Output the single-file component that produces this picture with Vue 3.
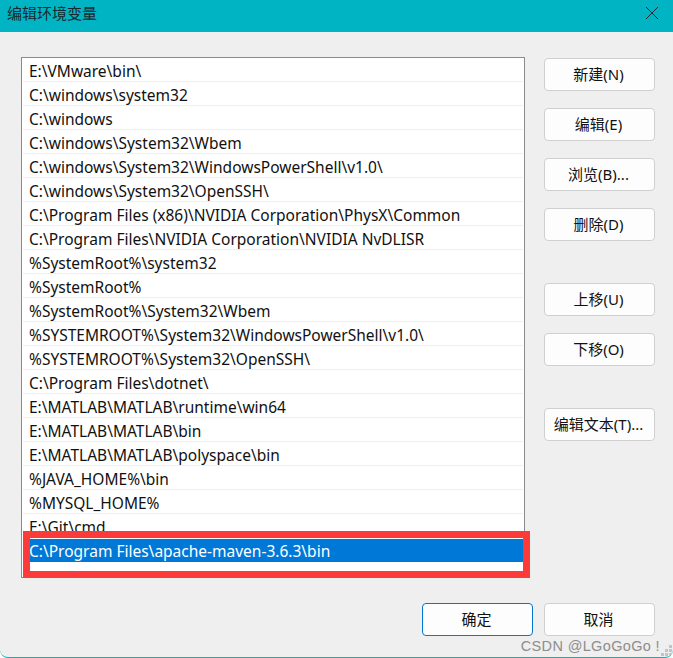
<script setup>
const rows = [
  'E:\\VMware\\bin\\',
  'C:\\windows\\system32',
  'C:\\windows',
  'C:\\windows\\System32\\Wbem',
  'C:\\windows\\System32\\WindowsPowerShell\\v1.0\\',
  'C:\\windows\\System32\\OpenSSH\\',
  'C:\\Program Files (x86)\\NVIDIA Corporation\\PhysX\\Common',
  'C:\\Program Files\\NVIDIA Corporation\\NVIDIA NvDLISR',
  '%SystemRoot%\\system32',
  '%SystemRoot%',
  '%SystemRoot%\\System32\\Wbem',
  '%SYSTEMROOT%\\System32\\WindowsPowerShell\\v1.0\\',
  '%SYSTEMROOT%\\System32\\OpenSSH\\',
  'C:\\Program Files\\dotnet\\',
  'E:\\MATLAB\\MATLAB\\runtime\\win64',
  'E:\\MATLAB\\MATLAB\\bin',
  'E:\\MATLAB\\MATLAB\\polyspace\\bin',
  '%JAVA_HOME%\\bin',
  '%MYSQL_HOME%',
  'E:\\Git\\cmd',
]
const selected = 'C:\\Program Files\\apache-maven-3.6.3\\bin'
const groups = [
  ['新建(N)', '编辑(E)', '浏览(B)...', '删除(D)'],
  ['上移(U)', '下移(O)'],
  ['编辑文本(T)...'],
]
</script>

<template>
  <div class="window">
    <header class="titlebar">
      <span class="title">编辑环境变量</span>
      <svg class="close" width="14" height="14" viewBox="0 0 14 14">
        <path d="M1 1 L13 13 M13 1 L1 13" stroke="#1c2b2e" stroke-width="1" fill="none" />
      </svg>
    </header>
    <main class="body">
      <div class="top">
        <div class="list">
          <div v-for="r in rows" :key="r" class="row">{{ r }}</div>
          <div class="row selected"><span class="sel-text">{{ selected }}</span></div>
          <div class="highlight"></div>
        </div>
        <div class="side">
          <div v-for="(g, i) in groups" :key="i" class="group">
            <button v-for="b in g" :key="b" class="btn">{{ b }}</button>
          </div>
        </div>
      </div>
      <div class="footer">
        <button class="btn primary">确定</button>
        <button class="btn">取消</button>
      </div>
    </main>
    <span class="mark">CSDN @LGoGoGo !</span>
    <svg class="grip" width="12" height="12" viewBox="0 0 12 12">
      <g fill="#c4c4c4">
        <rect x="8" y="0" width="3" height="3" />
        <rect x="4" y="4" width="3" height="3" />
        <rect x="8" y="4" width="3" height="3" />
        <rect x="0" y="8" width="3" height="3" />
        <rect x="4" y="8" width="3" height="3" />
        <rect x="8" y="8" width="3" height="3" />
      </g>
    </svg>
  </div>
</template>

<style>
html, body { margin: 0; background: #fff; }
</style>

<style scoped>
.window {
  position: relative;
  width: 673px;
  height: 658px;
  box-sizing: border-box;
  background: #efefef;
  border-bottom: 1px solid #00b4c4;
  border-radius: 0 0 8px 8px;
  overflow: hidden;
  font-family: "Noto Sans", "Noto Sans CJK SC", sans-serif;
  font-size: 15.5px;
  color: #111;
}
.titlebar {
  height: 32px;
  background: #00b4c4;
  display: flex;
  align-items: center;
  justify-content: space-between;
  padding: 0 14px 0 7px;
}
.title { font-size: 15px; line-height: 27px; margin-bottom: 5px; color: #17292c; }
.close { display: block; margin-bottom: 6px; }
.body { padding: 25px 18px 0 21px; }
.top { display: flex; justify-content: space-between; }
.list {
  position: relative;
  box-sizing: border-box;
  width: 504px;
  height: 521px;
  background: #fff;
  border: 1px solid #8a8a8f;
}
.row {
  box-sizing: border-box;
  height: 24px;
  margin: 0 1px;
  padding: 0 6px;
  line-height: 26px;
  border-bottom: 1px solid #efefef;
  white-space: nowrap;
}
.selected {
  border: 0;
  margin-left: 8px;
  padding: 0;
  margin-top: 1px;
  height: 23px;
  width: 493px;
  line-height: 24px;
  text-indent: -1px;
  background: #0078d7;
  color: #fff;
}
.highlight {
  position: absolute;
  left: 1px;
  top: 473px;
  width: 507px;
  height: 47px;
  box-sizing: border-box;
  border: 7px solid #fc3a3a;
}
.side { display: flex; flex-direction: column; gap: 42px; padding-top: 1px; }
.group { display: flex; flex-direction: column; gap: 17px; }
.btn {
  box-sizing: border-box;
  display: block;
  width: 111px;
  height: 33px;
  padding: 0 2px 2px 0;
  background: #fdfdfd;
  border: 1px solid #d0d0d0;
  border-radius: 4px;
  font: inherit;
  font-size: 15px;
  color: #111;
  white-space: nowrap;
}
.primary { border: 1px solid #0078d4; }
.footer {
  display: flex;
  justify-content: flex-end;
  gap: 11px;
  margin-top: 25px;
}
.mark {
  position: absolute;
  right: 13px;
  bottom: 3px;
  font-family: "Liberation Sans", "Noto Sans CJK SC", sans-serif;
  font-size: 14.5px;
  letter-spacing: 0.35px;
  color: #8d8d8d;
  white-space: nowrap;
}
.grip { position: absolute; right: 0; bottom: 0; }
</style>
